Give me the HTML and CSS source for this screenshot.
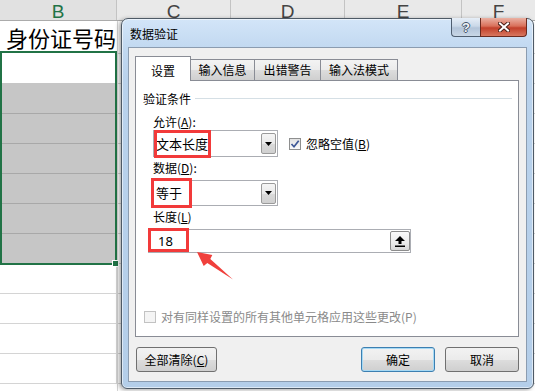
FILE: index.html
```html
<!DOCTYPE html>
<html lang="zh-CN">
<head>
  <meta charset="UTF-8">
  <title>数据验证</title>
  <link rel="stylesheet" href="styles.css">
</head>
<body>

<div class="sheet">
  <div class="col-heads">
    <div class="col-head col-b-head active">B</div>
    <div class="col-head col-c-head">C</div>
    <div class="col-head col-d-head">D</div>
    <div class="col-head col-e-head">E</div>
    <div class="col-head col-f-head">F</div>
  </div>
  <div class="sheet-body">
    <div class="col-b">
      <div class="cell title-cell">身份证号码</div>
      <div class="selection">
        <div class="sel-cell first"></div>
        <div class="sel-cell shaded"></div>
        <div class="sel-cell shaded line"></div>
        <div class="sel-cell shaded line"></div>
        <div class="sel-cell shaded line"></div>
        <div class="sel-cell shaded line"></div>
        <div class="sel-cell shaded line"></div>
        <span class="fill-handle"></span>
      </div>
      <div class="cell plain short"></div>
      <div class="cell plain"></div>
      <div class="cell plain"></div>
      <div class="cell plain"></div>
    </div>
    <div class="col-rest"></div>
  </div>
</div>

<div class="dialog">
  <div class="titlebar">
    <span class="title">数据验证</span>
    <div class="caption-btns">
      <span class="cap-btn help">?</span>
      <span class="cap-btn close">
        <svg width="12" height="10" viewBox="0 0 12 10">
          <path d="M2 1.5 L10 8.5 M10 1.5 L2 8.5" stroke="#4a2018" stroke-width="4" stroke-linecap="square"/>
          <path d="M2 1.5 L10 8.5 M10 1.5 L2 8.5" stroke="#ffffff" stroke-width="2" stroke-linecap="square"/>
        </svg>
      </span>
    </div>
  </div>

  <div class="client">
    <div class="tabs">
      <div class="tab selected">设置</div>
      <div class="tab t2">输入信息</div>
      <div class="tab t3">出错警告</div>
      <div class="tab t4">输入法模式</div>
    </div>

    <div class="panel">
      <div class="group-head">
        <span>验证条件</span>
        <span class="rule"></span>
      </div>

      <div class="field-label first">允许(<u>A</u>):</div>
      <div class="field-row">
        <div class="combo combo-allow">
          <span class="combo-value">文本长度</span>
          <span class="drop-btn"><svg width="7" height="4" viewBox="0 0 7 4"><polygon points="0,0 7,0 3.5,4" fill="#000"/></svg></span>
          <span class="mark mark-allow"></span>
        </div>
        <label class="check">
          <span class="box checked">
            <svg width="10" height="10" viewBox="0 0 10 10"><path d="M1.5 5 L4 7.8 L8.7 1.8" fill="none" stroke="#3d5796" stroke-width="1.7"/></svg>
          </span>
          <span>忽略空值(<u>B</u>)</span>
        </label>
      </div>

      <div class="field-label">数据(<u>D</u>):</div>
      <div class="field-row">
        <div class="combo combo-data">
          <span class="combo-value">等于</span>
          <span class="drop-btn"><svg width="7" height="4" viewBox="0 0 7 4"><polygon points="0,0 7,0 3.5,4" fill="#000"/></svg></span>
          <span class="mark mark-data"></span>
        </div>
      </div>

      <div class="field-label">长度(<u>L</u>)</div>
      <div class="ref-input">
        <span class="input-value">18</span>
        <span class="ref-btn">
          <svg width="10" height="11" viewBox="0 0 10 11"><polygon points="5,0 10,5 6.5,5 6.5,8 3.5,8 3.5,5 0,5" fill="#000"/><rect x="0" y="9.5" width="10" height="1.5" fill="#000"/></svg>
        </span>
        <span class="mark mark-len"></span>
      </div>

      <label class="check apply-all">
        <span class="box disabled"></span>
        <span>对有同样设置的所有其他单元格应用这些更改(P)</span>
      </label>
    </div>

    <div class="buttons">
      <button class="btn clear">全部清除(<u>C</u>)</button>
      <button class="btn ok">确定</button>
      <button class="btn cancel">取消</button>
    </div>
  </div>
</div>

<svg class="arrow" width="535" height="391" viewBox="0 0 535 391">
  <polygon points="197,252 212.3,255 210.3,259.1 233,279.5 207.3,263.1 203.7,266" fill="#f0403c"/>
</svg>

</body>
</html>
```

FILE: styles.css
```css
body { margin: 0; width: 535px; height: 391px; overflow: hidden; position: relative; background: #fff; font-family: "Noto Sans CJK SC", "Liberation Sans", sans-serif; }

/* spreadsheet behind the dialog */
.sheet { width: 535px; }
.col-heads { display: flex; height: 21px; background: #e9e9e9; border-bottom: 1px solid #ababab; box-sizing: border-box; overflow: hidden; }
.col-head { box-sizing: border-box; border-right: 1px solid #c3c3c3; font-family: "Liberation Sans", sans-serif; font-size: 19px; line-height: 20px; color: #444; text-align: center; padding-top: 2px; }
.col-head.active { color: #217346; background: #e1e1e1; }
.col-b-head { width: 117px; }
.col-c-head { width: 114px; }
.col-d-head { width: 114px; }
.col-e-head { width: 117px; }
.col-f-head { flex: 1; border-right: none; }

.sheet-body { display: flex; }
.col-b { width: 117px; }
.col-rest { flex: 1; height: 370px; border-left: 1px solid #d4d4d4; background: repeating-linear-gradient(to bottom, transparent 0 29px, #d4d4d4 29px 30px); background-position: 0 3px; }

.cell { box-sizing: border-box; height: 30px; border-right: 1px solid #d4d4d4; }
.title-cell { font-size: 22px; line-height: 27px; padding: 3px 0 0 6px; white-space: nowrap; color: #000; border-right: none; }
.plain { border-bottom: 1px solid #d4d4d4; }
.plain.short { height: 29px; }

.selection { position: relative; box-sizing: border-box; width: 117px; border: 2px solid #217346; }
.sel-cell { height: 30px; box-sizing: border-box; }
.sel-cell.shaded { background: #c6c6c6; }
.sel-cell.line { border-top: 1px solid #a8a8a8; }
.fill-handle { position: absolute; right: -4px; bottom: -4px; width: 5px; height: 5px; background: #217346; border: 1px solid #fff; }

/* dialog window */
.dialog { position: absolute; left: 121px; top: 18px; width: 413px; height: 371px; box-sizing: border-box; border: 1px solid #4e5a66; border-radius: 7px 7px 6px 6px; padding: 0 6px 6px; display: flex; flex-direction: column; background: linear-gradient(to bottom, #d3e5f8 0, #c2d9f1 28px, #b9d2ec 60px, #b4cee9 100%); box-shadow: inset 0 0 0 1px rgba(255,255,255,0.55), -2px 1px 4px rgba(0,0,0,0.35); }
.titlebar { height: 28px; display: flex; align-items: flex-start; }
.title { font-size: 12px; line-height: 16px; margin: 7px 0 0 2px; color: #000; }
.caption-btns { margin-left: auto; display: flex; margin-top: -1px; }
.cap-btn { height: 19px; box-sizing: border-box; display: flex; align-items: center; justify-content: center; border: 1px solid #4f5e70; border-top: none; }
.cap-btn.help { width: 29px; border-radius: 0 0 0 4px; border-right: none; background: linear-gradient(to bottom, #e6eef7 0, #cad8e8 45%, #b3c4d9 55%, #c9d7e6 100%); font-family: "Liberation Sans", sans-serif; font-weight: bold; font-size: 13px; color: #f2f4f7; text-shadow: 1px 0 0 #44546a, -1px 0 0 #44546a, 0 1px 0 #44546a, 0 -1px 0 #44546a; }
.cap-btn.close { width: 47px; border-radius: 0 0 4px 0; border-color: #6b2a1f; background: linear-gradient(to bottom, #eab1a3 0, #d9705a 45%, #c2402b 55%, #d8775f 100%); }

.client { flex: 1; border: 1px solid #8b9cb0; background: #f0f0f0; padding: 8px 7px 0 6px; display: flex; flex-direction: column; }

.tabs { display: flex; align-items: flex-end; height: 25px; position: relative; z-index: 1; }
.tab { box-sizing: border-box; height: 22px; border: 1px solid #898c95; font-size: 12px; line-height: 18px; text-align: center; color: #000; background: linear-gradient(to bottom, #f3f3f3 0, #ebebeb 50%, #dddddd 51%, #cfcfcf 100%); margin-left: -1px; padding-top: 1px; }
.tab.selected { height: 25px; width: 56px; margin-left: 0; background: #fff; border-bottom: none; padding-top: 5px; }
.t2 { width: 65px; }
.t3 { width: 67px; }
.t4 { width: 78px; }

.panel { height: 257px; box-sizing: border-box; margin-top: -1px; border: 1px solid #898c95; background: #fff; padding: 0 6px 11px 7px; display: flex; flex-direction: column; font-size: 12px; color: #000; }
.group-head { display: flex; align-items: center; height: 18px; line-height: 18px; margin-top: 9px; }
.rule { flex: 1; height: 1px; background: #d5dfe5; margin-left: 4px; margin-top: -1px; }
.field-label { line-height: 16px; margin: 3px 0 0 10px; }
.field-label.first { margin-top: 6px; }
.field-row { display: flex; align-items: center; margin-left: 10px; }

.combo { position: relative; width: 125px; height: 27px; box-sizing: border-box; border: 1px solid #abadb3; background: #fff; display: flex; align-items: center; }
.combo-data { height: 26px; margin-top: 4px; }
.combo-value { flex: 1; padding-left: 2px; line-height: 16px; font-size: 13px; }
.drop-btn { width: 15px; height: 21px; margin-right: 1px; box-sizing: border-box; border: 1px solid #9a9a9a; border-radius: 2px; background: linear-gradient(to bottom, #f5f5f5 0, #e9e9e9 50%, #dadada 51%, #d0d0d0 100%); display: flex; align-items: center; justify-content: center; }

.mark { position: absolute; box-sizing: border-box; border: 3px solid #f23a3a; pointer-events: none; }
.mark-allow { left: 0; top: -1px; width: 57px; height: 28px; }
.mark-data { left: -3px; top: -3px; width: 41px; height: 30px; }
.mark-len { left: -1px; top: -2px; width: 41px; height: 24px; }

.check { display: flex; align-items: center; }
.field-row .check { margin-left: 11px; }
.check .box { width: 12px; height: 12px; box-sizing: border-box; border: 1px solid #8e8f8f; background: linear-gradient(to bottom, #dcdcdc, #f6f6f6); display: flex; align-items: center; justify-content: center; margin-right: 5px; }
.check .box.checked { background: linear-gradient(to bottom, #e2e2e2, #fafafa); }

.ref-input { position: relative; width: 263px; height: 24px; box-sizing: border-box; border: 1px solid #abadb3; margin: 4px 0 0 5px; display: flex; align-items: center; }
.input-value { flex: 1; padding-left: 9px; font-family: "Noto Sans", "Liberation Sans", sans-serif; font-size: 13px; line-height: 16px; }
.ref-btn { width: 20px; height: 20px; box-sizing: border-box; border: 1px solid #8c8c8c; border-radius: 2px; background: linear-gradient(to bottom, #fafafa 0, #ececec 60%, #d8d8d8 100%); display: flex; align-items: center; justify-content: center; }

.apply-all { margin: auto 0 0 1px; color: #8a8a8a; line-height: 16px; }
.apply-all .box { border-color: #c2c2c2; background: #f4f4f4; }

.buttons { display: flex; margin-top: 10px; padding-left: 1px; }
.btn { height: 25px; box-sizing: border-box; border: 1px solid #707070; border-radius: 3px; background: linear-gradient(to bottom, #f2f2f2 0, #ebebeb 50%, #dddddd 51%, #cfcfcf 100%); font-family: "Noto Sans CJK SC", sans-serif; font-size: 12px; color: #000; padding: 0; line-height: 16px; }
.btn.clear { width: 81px; }
.btn.ok { width: 74px; margin-left: auto; border-color: #3c7fb1; box-shadow: inset 0 0 0 1px #a6d9f4; }
.btn.cancel { width: 74px; margin-left: 10px; }

.arrow { position: absolute; left: 0; top: 0; pointer-events: none; }
```
